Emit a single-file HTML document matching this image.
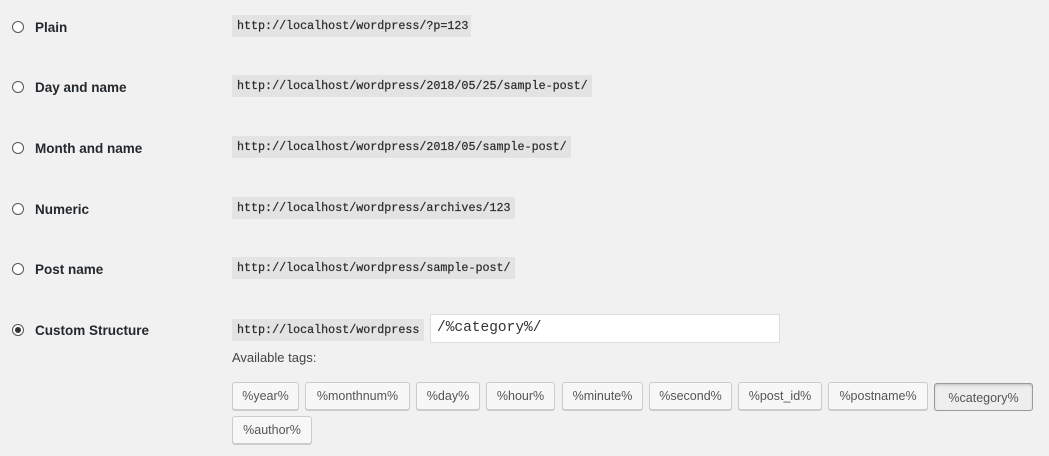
<!DOCTYPE html>
<html><head><meta charset="utf-8"><style>
body{margin:0;width:1049px;height:456px;background:#f1f1f1;position:relative;overflow:hidden;font-family:"Liberation Sans",sans-serif;color:#23282d}
.r{position:absolute;left:12px;width:10px;height:10px;border:1px solid #555;border-radius:50%;background:#fff}
.r.on::after{content:"";position:absolute;left:2px;top:2px;width:6px;height:6px;border-radius:50%;background:#333}
.l{position:absolute;left:35px;font-size:13.5px;font-weight:bold;line-height:18px;top:1px}
.c{position:absolute;left:232px;height:22px;line-height:22px;background:#e3e3e3;font-family:"Liberation Mono",monospace;font-size:11.7px;padding-left:5px;box-sizing:border-box;color:#2a2a2a;white-space:nowrap;overflow:hidden;-webkit-text-stroke:0.2px #2a2a2a}
.in{position:absolute;left:430px;top:314px;width:350px;height:29px;background:#fff;border:1px solid #ddd;box-sizing:border-box;font-family:"Liberation Mono",monospace;font-size:14.5px;line-height:27px;padding-left:6px;color:#333}
.b{position:absolute;height:28px;box-sizing:border-box;border:1px solid #ccc;border-radius:3px;background:#f7f7f7;box-shadow:0 1px 0 #ccc;font-size:12.5px;color:#555;text-align:center;line-height:26px;white-space:nowrap}
.b.p{background:#eee;border-color:#999;box-shadow:inset 0 2px 5px -3px rgba(0,0,0,.5);line-height:28px}
.av{position:absolute;left:232px;top:350px;font-size:13px;color:#444}
</style></head><body>
<div class="r" style="top:21px"></div><div class="l" style="margin-top:18px">Plain</div>
<div class="c" style="top:15px;width:239px">http://localhost/wordpress/?p=123</div>
<div class="r" style="top:81px"></div><div class="l" style="margin-top:78px">Day and name</div>
<div class="c" style="top:75px;width:360px">http://localhost/wordpress/2018/05/25/sample-post/</div>
<div class="r" style="top:142px"></div><div class="l" style="margin-top:139px">Month and name</div>
<div class="c" style="top:136px;width:339px">http://localhost/wordpress/2018/05/sample-post/</div>
<div class="r" style="top:203px"></div><div class="l" style="margin-top:200px">Numeric</div>
<div class="c" style="top:197px;width:283px">http://localhost/wordpress/archives/123</div>
<div class="r" style="top:263px"></div><div class="l" style="margin-top:260px">Post name</div>
<div class="c" style="top:257px;width:283px">http://localhost/wordpress/sample-post/</div>
<div class="r on" style="top:324px"></div><div class="l" style="margin-top:321px">Custom Structure</div>
<div class="c" style="top:319px;width:192px">http://localhost/wordpress</div>
<div class="in">/%category%/</div>
<div class="av">Available tags:</div>
<div class="b" style="left:232px;top:382px;width:67px">%year%</div>
<div class="b" style="left:305px;top:382px;width:105px">%monthnum%</div>
<div class="b" style="left:416px;top:382px;width:64px">%day%</div>
<div class="b" style="left:486px;top:382px;width:69px">%hour%</div>
<div class="b" style="left:562px;top:382px;width:81px">%minute%</div>
<div class="b" style="left:649px;top:382px;width:83px">%second%</div>
<div class="b" style="left:738px;top:382px;width:84px">%post_id%</div>
<div class="b" style="left:828px;top:382px;width:100px">%postname%</div>
<div class="b p" style="left:934px;top:383px;width:99px">%category%</div>
<div class="b" style="left:232px;top:416px;width:80px">%author%</div>
</body></html>
